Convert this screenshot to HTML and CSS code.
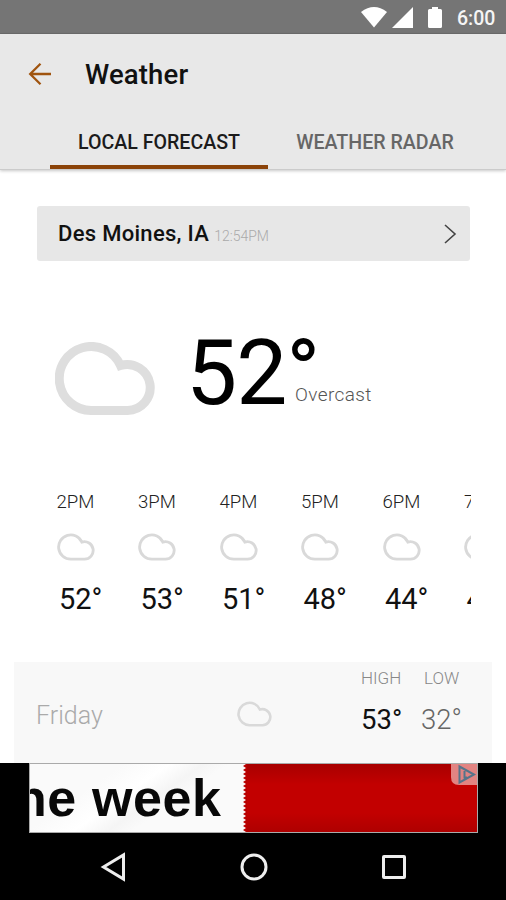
FILE: index.html
```html
<!DOCTYPE html>
<html lang="en">
<head>
<meta charset="utf-8">
<title>Weather</title>
<link rel="stylesheet" href="styles.css">
</head>
<body>
<svg width="0" height="0" class="defs">
  <symbol id="cloud" viewBox="0 0 100 73"><path d="M36.5 68.5A32 32 0 1 1 65.5 23.5A23 23 0 1 1 72.5 68.5Z"/></symbol>
</svg>
<div class="screen">
  <header class="status">
    <svg class="status-icons" width="82" height="34" viewBox="0 0 82 34">
      <path d="M0 12Q13 2 26 12L13 27.5Z"/>
      <path d="M52 7V28H31Z"/>
      <path d="M71 7H77V9H79.5Q81 9 81 10.5V26.5Q81 28 79.5 28H68.5Q67 28 67 26.5V10.5Q67 9 68.5 9H71Z"/>
    </svg>
    <span class="clock">6:00</span>
  </header>
  <nav class="appbar">
    <div class="title-row">
      <svg class="back" width="24" height="24" viewBox="0 0 24 24"><path d="M23 12H2.5M12.5 1.7L2.2 12L12.5 22.3"/></svg>
      <h1>Weather</h1>
    </div>
    <div class="tabs">
      <a class="tab active"><span>LOCAL FORECAST</span></a>
      <a class="tab radar"><span>WEATHER RADAR</span></a>
    </div>
  </nav>
  <main>
    <section class="location">
      <span class="city">Des Moines, IA</span>
      <span class="time">12:54PM</span>
      <svg class="chevron" width="12" height="20" viewBox="0 0 12 20"><path d="M1 1L11 10L1 19"/></svg>
    </section>
    <section class="now">
      <svg class="cloud big" width="100" height="73"><use href="#cloud"/></svg>
      <span class="temp">52°</span>
      <span class="condition">Overcast</span>
    </section>
    <section class="hours">
      <div class="hour"><span>2PM</span><svg class="cloud" width="38" height="28"><use href="#cloud"/></svg><b>52°</b></div>
      <div class="hour"><span>3PM</span><svg class="cloud" width="38" height="28"><use href="#cloud"/></svg><b>53°</b></div>
      <div class="hour"><span>4PM</span><svg class="cloud" width="38" height="28"><use href="#cloud"/></svg><b>51°</b></div>
      <div class="hour"><span>5PM</span><svg class="cloud" width="38" height="28"><use href="#cloud"/></svg><b>48°</b></div>
      <div class="hour"><span>6PM</span><svg class="cloud" width="38" height="28"><use href="#cloud"/></svg><b>44°</b></div>
      <div class="hour"><span>7PM</span><svg class="cloud" width="38" height="28"><use href="#cloud"/></svg><b>43°</b></div>
    </section>
    <section class="day">
      <span class="name">Friday</span>
      <svg class="cloud" width="35" height="26"><use href="#cloud"/></svg>
      <div class="range high"><span>HIGH</span><b>53°</b></div>
      <div class="range low"><span>LOW</span><b>32°</b></div>
    </section>
  </main>
  <footer>
    <div class="ad">
      <div class="ad-copy"><span>he week</span></div>
      <svg class="zigzag" width="4" height="68"><defs><pattern id="teeth" width="4" height="4" patternUnits="userSpaceOnUse"><path d="M3 0L0 2L3 4H4V0Z" fill="#b90000"/></pattern></defs><rect width="4" height="68" fill="url(#teeth)"/></svg>
      <div class="ad-red"></div>
      <svg class="adchoices" width="26" height="21" viewBox="0 0 26 21"><path class="plate" d="M0 0H26V21H8Q0 21 0 13Z"/><path class="mark" d="M8.5 2.500L23 10.5L8.500 18.500ZM13.500 7V13.500H16"/></svg>
    </div>
    <div class="keys">
      <svg width="26" height="28" viewBox="0 0 26 28"><path d="M23.500 2V26L3.500 14Z"/></svg>
      <svg width="28" height="28" viewBox="0 0 28 28"><circle cx="14" cy="14" r="12"/></svg>
      <svg width="26" height="26" viewBox="0 0 26 26"><rect x="2.5" y="2.5" width="21" height="21" rx=".5"/></svg>
    </div>
  </footer>
</div>
</body>
</html>
```

FILE: styles.css
```css
* { box-sizing: border-box; }
body { margin: 0; background: #fff; font-family: Roboto, sans-serif; color: #111; }
.defs { display: block; }
.screen { width: 506px; height: 900px; display: flex; flex-direction: column; overflow: hidden; }
svg { flex: none; overflow: visible; }

.status { height: 34px; flex: none; background: #757575; border-bottom: 1px solid #6c6c6c; display: flex; align-items: center; justify-content: flex-end; padding-right: 11px; }
.status-icons { fill: #fff; margin-right: 14px; }
.clock { width: 38px; color: #f5f5f5; font-size: 19.5px; font-weight: 500; line-height: 34px; white-space: nowrap; padding-top: 4px; }

.appbar { height: 136px; flex: none; background: #e8e8e8; border-bottom: 1px solid #cbcbcb; box-shadow: 0 1px 3px rgba(0,0,0,.22); }
.title-row { height: 80px; display: flex; align-items: center; padding-left: 28px; }
.back { fill: none; stroke: #a0540f; stroke-width: 2.3; }
h1 { margin: 1px 0 0 33px; font-size: 27.5px; line-height: 32px; font-weight: 500; letter-spacing: .15px; }
.tabs { display: flex; padding-left: 50px; height: 55px; }
.tab { width: 218px; height: 55px; padding-top: 16px; text-align: center; font-size: 19.6px; line-height: 26px; font-weight: 500; color: #666; white-space: nowrap; }
.tab.active { color: #1b1b1b; border-bottom: 4px solid #8b4309; }
.tab.radar { width: 214px; }

main { flex: none; height: 593px; padding-top: 36px; }
.location { margin-left: 37px; width: 433px; height: 55px; background: #e7e7e7; border-radius: 3px; display: flex; align-items: baseline; padding: 0 14px 0 21px; line-height: 55px; white-space: nowrap; }
.city { font-size: 22px; font-weight: 500; letter-spacing: .3px; }
.time { margin-left: 5px; font-size: 14px; font-weight: 300; color: #aaa; }
.chevron { margin-left: auto; align-self: center; fill: none; stroke: #444; stroke-width: 1.6; margin-top: 1px; }

.cloud { fill: none; stroke: #d9d9d9; stroke-width: 7.5; }
.cloud.big { stroke: #dedede; stroke-width: 9; margin-top: 81px; }
.now { height: 217px; padding-left: 55px; display: flex; align-items: flex-start; }
.temp { margin: 58px 0 0 31px; width: 132px; font-size: 91px; line-height: 108px; letter-spacing: -1px; color: #000; }
.condition { margin: 121px 0 0 -23px; font-size: 19px; line-height: 26px; font-weight: 300; color: #555; letter-spacing: .4px; }

.hours { width: 471px; height: 184px; padding: 12px 0 0 56.5px; display: flex; overflow: hidden; }
.hour { flex: 0 0 81.5px; display: flex; flex-direction: column; align-items: flex-start; }
.hour span { font-size: 18.6px; line-height: 24px; font-weight: 300; color: #222; }
.hour svg { margin-top: 19px; }
.hour b { margin: 21px 0 0 2.5px; font-size: 29px; line-height: 34px; font-weight: 400; color: #111; }

.day { margin-left: 14px; width: 478px; height: 101px; background: #f8f8f8; display: flex; align-items: flex-start; padding-left: 22px; }
.name { width: 201px; margin-top: 37px; font-size: 25px; line-height: 34px; font-weight: 300; color: #aaa; }
.day .cloud { margin-top: 39px; }
.range { display: flex; flex-direction: column; }
.range span { font-size: 17px; line-height: 24px; margin-top: 4px; font-weight: 300; color: #888; }
.range b { font-size: 27.5px; line-height: 34px; margin-top: 13px; font-weight: 400; color: #111; }
.high { margin-left: 89px; width: 60px; }
.low span { padding-left: 3px; }
.low b { color: #666; font-weight: 300; }

footer { flex: none; height: 137px; background: #000; }
.ad { position: relative; display: flex; margin-left: 29px; width: 449px; height: 70px; border: 1px solid #aaa; overflow: hidden; }
.ad-copy { width: 213px; background: linear-gradient(145deg, #fafafa 30%, #fff 45%, #f5f5f5 56%, #fafafa 64%); overflow: hidden; }
.ad-copy span { display: block; margin: 4px 0 0 -15px; font: bold 52px/60px "Liberation Sans", sans-serif; letter-spacing: .6px; color: #080808; white-space: nowrap; }
.zigzag { background: #fafafa; }
.ad-red { flex: 1; background: linear-gradient(#a80000, #c20000 30%, #c20000 72%, #ae0000); }
.adchoices { position: absolute; top: 0; right: 0; }
.plate { fill: #e28482; }
.mark { fill: none; stroke: #56748a; stroke-width: 2; }
.keys { height: 67px; display: flex; align-items: center; padding: 0 99px 0 100px; justify-content: space-between; fill: none; stroke: #eee; stroke-width: 3; }
```
